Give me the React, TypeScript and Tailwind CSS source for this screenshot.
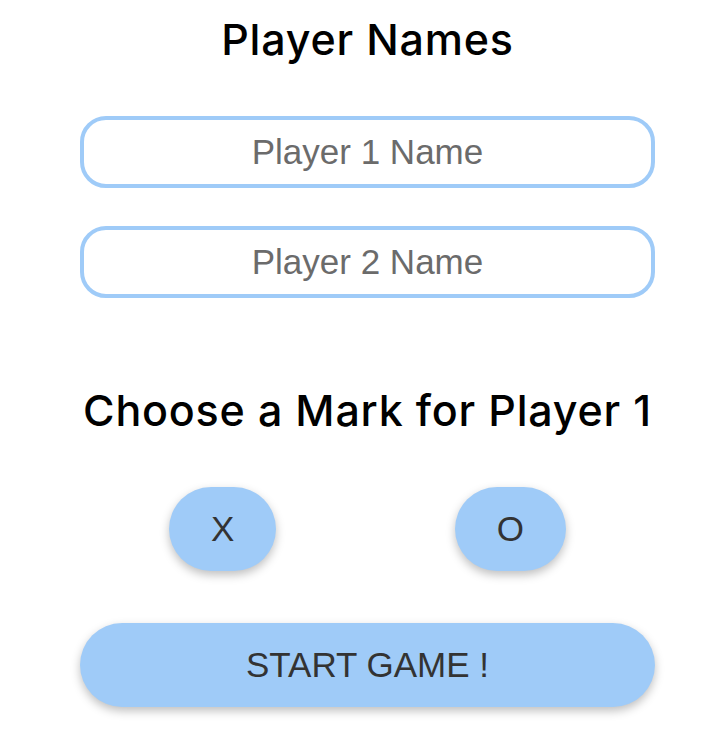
export default function App() {
  const heading = "whitespace-nowrap text-center text-[43px] font-medium leading-[60px] text-black font-['Inter',sans-serif] tracking-[0.8px]"

  return (
    <div className="min-h-screen bg-white pl-[11px]">
      <div className="mx-auto flex w-[575px] flex-col pt-[9px]">
        <h1 className={heading}>Player Names</h1>

        <div className="mt-[47px] flex flex-col gap-[38px]">
          <input
            type="text"
            placeholder="Player 1 Name"
            className="h-[72px] w-full rounded-[26px] border-4 border-[#9fcbf8] bg-white text-center font-['Liberation_Sans',Arial,sans-serif] text-[35px] text-[#333] outline-none placeholder:text-[#6b6b6b]"
          />
          <input
            type="text"
            placeholder="Player 2 Name"
            className="h-[72px] w-full rounded-[26px] border-4 border-[#9fcbf8] bg-white text-center font-['Liberation_Sans',Arial,sans-serif] text-[35px] text-[#333] outline-none placeholder:text-[#6b6b6b]"
          />
        </div>

        <h2 className={`${heading} mt-[82px]`}>Choose a Mark for Player 1</h2>

        <div className="mt-[47px] flex justify-around">
          <button
            type="button"
            className="h-[84px] rounded-[42px] bg-[#9fcbf8] px-[42px] font-['Liberation_Sans',Arial,sans-serif] text-[35px] text-[#333] shadow-[0_4px_10px_rgba(0,0,0,0.25)]"
          >
            X
          </button>
          <button
            type="button"
            className="h-[84px] rounded-[42px] bg-[#9fcbf8] px-[42px] font-['Liberation_Sans',Arial,sans-serif] text-[35px] text-[#333] shadow-[0_4px_10px_rgba(0,0,0,0.25)]"
          >
            O
          </button>
        </div>

        <button
          type="button"
          className="mt-[52px] h-[84px] w-full rounded-full bg-[#9fcbf8] font-['Liberation_Sans',Arial,sans-serif] text-[35px] text-[#333] shadow-[0_4px_10px_rgba(0,0,0,0.25)]"
        >
          START GAME !
        </button>
      </div>
    </div>
  )
}
